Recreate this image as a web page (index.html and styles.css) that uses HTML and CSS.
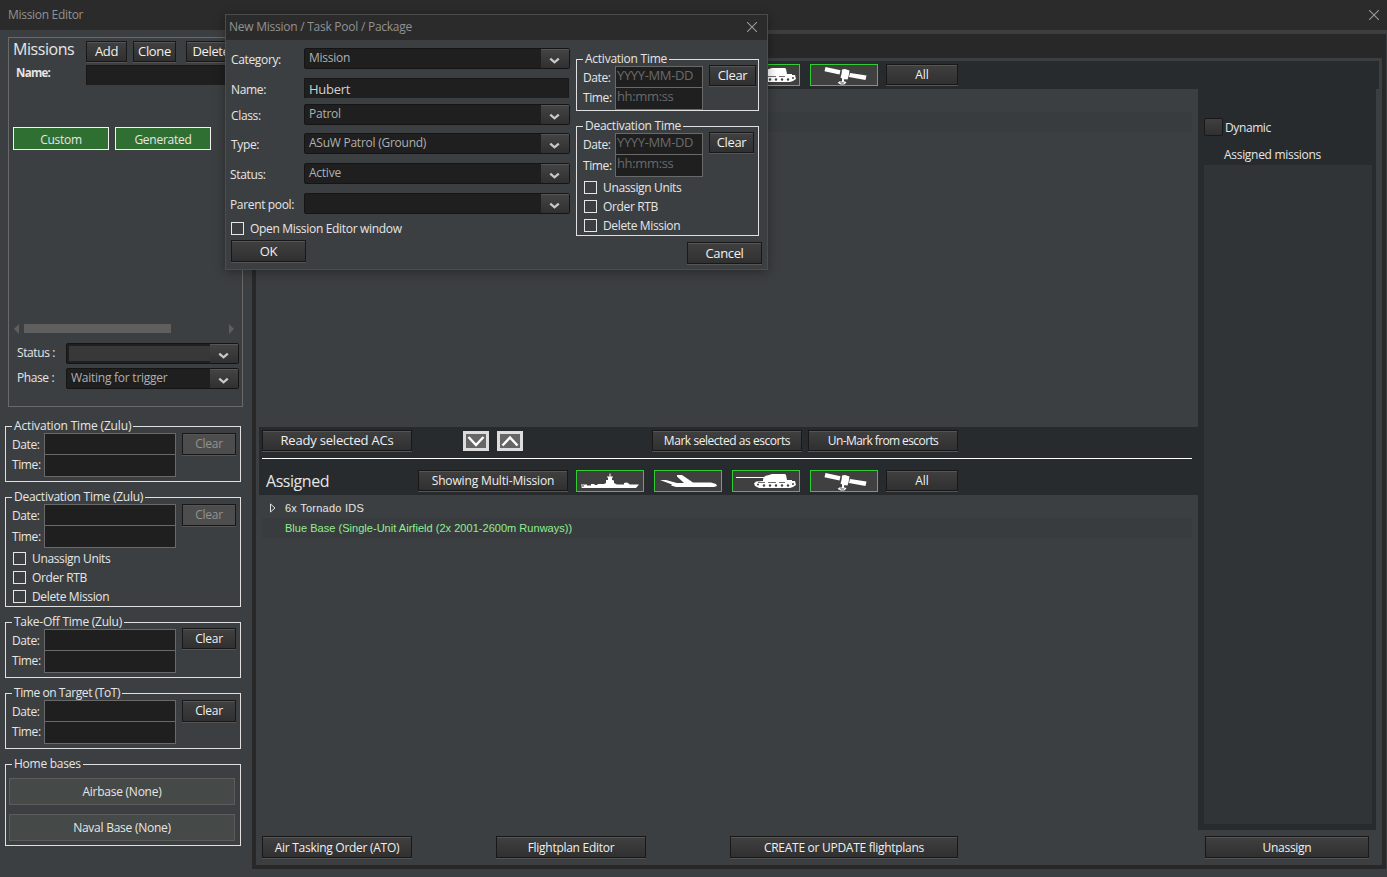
FILE: index.html
```
<!DOCTYPE html>
<html lang="en">
<head>
    <meta charset="UTF-8">
    <meta name="viewport" content="width=device-width, initial-scale=1.0">
    <title>Mission Editor</title>
    <link rel="stylesheet" href="styles.css">
</head>
<body>
    <!-- shared icons -->
    <svg class="sprites" width="0" height="0">
        <symbol id="ship" viewBox="0 0 66 20">
            <path fill="#fff" d="M5 17 4 15.500H7V14.500H4V13.500H10V14.500H14V13H17L18 14H20L21 13H27L29 12V9H31V6.500H30V5.500H32.500V2.500H33.500V5.500H36V6.500H35V9L37 9.500V12L40 13.500H47V12L50 11.500 53 13.500H62L59 17Z"/>
        </symbol>
        <symbol id="plane" viewBox="0 0 66 20">
            <path fill="#fff" d="M5 9H11L22 12H29L22 5.500V4H27L38 11.500H56L61 13 62 15 59 16H21L16 14.500 17 13.500Z"/>
        </symbol>
        <symbol id="tank" viewBox="0 0 66 20">
            <path fill="#fff" d="M3 6H31V7H3ZM30 8 32 5 36 4 39 3H52L53 4 54 9H59V10H62L63 14 60 16 57 17H26L22 15 21 12.500 23 10.500 30 10Z"/>
            <g fill="#404040">
                <circle cx="25" cy="13.500" r="1"/><circle cx="31" cy="14.500" r="1.200"/><circle cx="37" cy="14.500" r="1.200"/>
                <circle cx="43" cy="14.500" r="1.200"/><circle cx="49" cy="14.500" r="1.200"/><circle cx="55" cy="14.500" r="1.200"/><circle cx="60" cy="13" r="1"/>
                <path d="M25 11H32V11.800H25ZM35 11H43V11.800H35ZM46 11H52V11.800H46Z"/>
            </g>
        </symbol>
        <symbol id="sat" viewBox="0 0 66 20">
            <path fill="#fff" d="M14.500 2 29.500 5.200 28.500 9.500 13.500 6.300ZM31 4.500 34 4 38.500 5.500 38 9 37.500 11.500 36.500 14.500 32 14 29.500 12.500 30.500 9ZM39 8 55.500 10.500 54.500 15 38 12ZM31 13.500H33V17H31Z"/>
            <path fill="none" stroke="#fff" stroke-width="1.200" d="M27 17.500 30 19H33L35 17M28 17H34"/>
        </symbol>
        <symbol id="chev" viewBox="0 0 28 19">
            <path fill="none" stroke="#c8c8c8" stroke-width="2.400" d="M9 9 13.500 13 18 9"/>
        </symbol>
        <symbol id="close" viewBox="0 0 10 10">
            <path fill="none" stroke="#9a9a9a" stroke-width="1.100" d="M0 0 10 10M10 0 0 10"/>
        </symbol>
    </svg>

    <div class="titlebar">
        <span class="t-window">Mission Editor</span>
        <svg class="close"><use href="#close"/></svg>
    </div>

    <div class="main">
        <!-- left column -->
        <div class="sidebar">
            <div class="missions">
                <div class="missions-head">
                    <span class="heading">Missions</span>
                    <button class="btn big add">Add</button>
                    <button class="btn big clone">Clone</button>
                    <button class="btn big delete">Delete</button>
                </div>
                <div class="name-row">
                    <b>Name:</b>
                    <div class="box"></div>
                </div>
                <div class="tabs">
                    <button class="tab">Custom</button>
                    <button class="tab">Generated</button>
                </div>
                <div class="scrollbar">
                    <i class="arrow-left"></i>
                    <i class="thumb"></i>
                    <i class="arrow-right"></i>
                </div>
                <div class="select-row">
                    <span>Status :</span>
                    <div class="select"><div class="value focus"></div><svg class="drop"><use href="#chev"/></svg></div>
                </div>
                <div class="select-row">
                    <span>Phase :</span>
                    <div class="select"><div class="value">Waiting for trigger</div><svg class="drop"><use href="#chev"/></svg></div>
                </div>
            </div>

            <div class="group">
                <div class="group-title zulu">Activation Time (Zulu)</div>
                <div class="times">
                    <div class="labels"><span>Date:</span><span>Time:</span></div>
                    <div class="inputs"><div></div><div></div></div>
                    <button class="btn clear off">Clear</button>
                </div>
            </div>
            <div class="group tall">
                <div class="group-title">Deactivation Time (Zulu)</div>
                <div class="times">
                    <div class="labels apart"><span>Date:</span><span>Time:</span></div>
                    <div class="inputs"><div></div><div></div></div>
                    <button class="btn clear off">Clear</button>
                </div>
                <div class="checks">
                    <label class="check"><i></i>Unassign Units</label>
                    <label class="check"><i></i>Order RTB</label>
                    <label class="check"><i></i>Delete Mission</label>
                </div>
            </div>
            <div class="group">
                <div class="group-title">Take-Off Time (Zulu)</div>
                <div class="times">
                    <div class="labels"><span>Date:</span><span>Time:</span></div>
                    <div class="inputs"><div></div><div></div></div>
                    <button class="btn clear takeoff">Clear</button>
                </div>
            </div>
            <div class="group">
                <div class="group-title tot">Time on Target (ToT)</div>
                <div class="times">
                    <div class="labels"><span>Date:</span><span>Time:</span></div>
                    <div class="inputs"><div></div><div></div></div>
                    <button class="btn clear">Clear</button>
                </div>
            </div>
            <div class="group bases">
                <div class="group-title">Home bases</div>
                <button class="base">Airbase (None)</button>
                <button class="base">Naval Base (None)</button>
            </div>
        </div>

        <!-- right frame -->
        <div class="frame">
            <div class="strip"></div>
            <div class="filter-bar top">
                <div class="unit"><svg><use href="#ship"/></svg></div>
                <div class="unit"><svg><use href="#plane"/></svg></div>
                <div class="unit"><svg><use href="#tank"/></svg></div>
                <div class="unit"><svg><use href="#sat"/></svg></div>
                <button class="btn all">All</button>
            </div>
            <div class="columns">
                <div class="center">
                    <div class="list upper"><div class="row"></div><div class="row alt"></div></div>
                    <div class="band">
                        <div class="band-row">
                            <button class="btn w150 ready">Ready selected ACs</button>
                            <svg class="move down" viewBox="0 0 26 20"><path d="M1.500 1.500H24.500V18.500H1.500Z" fill="#666" stroke="#ddd" stroke-width="3"/><path d="M5.500 6 13 14 20.500 6" fill="none" stroke="#fff" stroke-width="2.500"/></svg>
                            <svg class="move" viewBox="0 0 26 20"><path d="M1.500 1.500H24.500V18.500H1.500Z" fill="#666" stroke="#ddd" stroke-width="3"/><path d="M5.500 14.500 13 6.500 20.500 14.500" fill="none" stroke="#fff" stroke-width="2.500"/></svg>
                            <button class="btn w150 mark">Mark selected as escorts</button>
                            <button class="btn w150 unmark">Un-Mark from escorts</button>
                        </div>
                        <div class="line"></div>
                        <div class="filter-bar">
                            <span class="heading assigned">Assigned</span>
                            <button class="btn w150 multi">Showing Multi-Mission</button>
                            <div class="unit"><svg><use href="#ship"/></svg></div>
                            <div class="unit"><svg><use href="#plane"/></svg></div>
                            <div class="unit"><svg><use href="#tank"/></svg></div>
                            <div class="unit"><svg><use href="#sat"/></svg></div>
                            <button class="btn all">All</button>
                        </div>
                    </div>
                    <div class="list lower">
                        <div class="row"><svg class="tri" viewBox="0 0 6 10"><path d="M.5 1V9L5 5Z" fill="none" stroke="#e0e0e0"/></svg><span class="unit-name">6x Tornado IDS</span></div>
                        <div class="row alt"><span class="base-name">Blue Base (Single-Unit Airfield (2x 2001-2600m Runways))</span></div>
                    </div>
                    <div class="actions">
                        <button class="btn w150">Air Tasking Order (ATO)</button>
                        <button class="btn w150">Flightplan Editor</button>
                        <button class="btn w228">CREATE or UPDATE flightplans</button>
                    </div>
                </div>
                <div class="side">
                    <div class="assigned-panel">
                        <label class="dynamic"><i></i><span>Dynamic</span></label>
                        <div class="assigned-title">Assigned missions</div>
                        <div class="assigned-list"></div>
                    </div>
                    <button class="btn unassign">Unassign</button>
                </div>
            </div>
        </div>
    </div>

    <!-- new mission dialog -->
    <div class="dialog">
        <div class="dialog-title">
            <span>New Mission / Task Pool / Package</span>
            <svg class="close"><use href="#close"/></svg>
        </div>
        <div class="dialog-body">
            <div class="form">
                <div class="fields">
                    <span>Category:</span><div class="select"><div class="value">Mission</div><svg class="drop"><use href="#chev"/></svg></div>
                    <span>Name:</span><div class="box">Hubert</div>
                    <span>Class:</span><div class="select"><div class="value">Patrol</div><svg class="drop"><use href="#chev"/></svg></div>
                    <span>Type:</span><div class="select"><div class="value">ASuW Patrol (Ground)</div><svg class="drop"><use href="#chev"/></svg></div>
                    <span class="out">Status:</span><div class="select"><div class="value">Active</div><svg class="drop"><use href="#chev"/></svg></div>
                    <span class="out">Parent pool:</span><div class="select"><div class="value"></div><svg class="drop"><use href="#chev"/></svg></div>
                </div>
                <label class="check open"><i></i>Open Mission Editor window</label>
                <button class="btn big ok">OK</button>
            </div>
            <div class="schedule">
                <div class="group">
                    <div class="group-title">Activation Time</div>
                    <div class="times">
                        <div class="labels"><span>Date:</span><span>Time:</span></div>
                        <div class="inputs"><div>YYYY-MM-DD</div><div>hh:mm:ss</div></div>
                        <button class="btn big clear wide">Clear</button>
                    </div>
                </div>
                <div class="group tall">
                    <div class="group-title">Deactivation Time</div>
                    <div class="times">
                        <div class="labels apart"><span>Date:</span><span>Time:</span></div>
                        <div class="inputs"><div>YYYY-MM-DD</div><div>hh:mm:ss</div></div>
                        <button class="btn big clear">Clear</button>
                    </div>
                    <div class="checks">
                        <label class="check"><i></i>Unassign Units</label>
                        <label class="check"><i></i>Order RTB</label>
                        <label class="check"><i></i>Delete Mission</label>
                    </div>
                </div>
                <button class="btn big cancel">Cancel</button>
            </div>
        </div>
    </div>
</body>
</html>
```
FILE: styles.css
```
* {
    box-sizing: border-box;
}

body {
    margin: 0;
    height: 877px;
    overflow: hidden;
    background-color: #3c3f41;
    color: #e6e6e6;
    font-family: "Open Sans", "Noto Sans", sans-serif;
    font-size: 12px;
    letter-spacing: -0.25px;
    line-height: 16px;
    white-space: nowrap;
}

button {
    font: inherit;
    letter-spacing: inherit;
    color: inherit;
    padding: 0;
    margin: 0;
}

.sprites {
    display: none;
}

.titlebar {
    display: flex;
    justify-content: space-between;
    align-items: center;
    height: 30px;
    padding: 0 8px;
    background-color: #2b2b2b;
    color: #929292;
}

.t-window {
    letter-spacing: -0.3px;
}

.close {
    width: 10px;
    height: 10px;
    overflow: visible;
}

.main {
    display: flex;
    height: 847px;
}

.heading {
    font-size: 16px;
    letter-spacing: -0.45px;
}

/* buttons and inputs */
.btn {
    flex: none;
    height: 21px;
    border: 1px solid #181818;
    border-radius: 0;
    background: linear-gradient(#404040, #303030);
    box-shadow: 0 1px 0 #555, inset 0 1px 0 #555;
    color: #f0f0f0;
    line-height: 18px;
    text-align: center;
}

.btn.big {
    padding-bottom: 2px;
    font-size: 13px;
    letter-spacing: -0.35px;
}

.btn.off {
    background: #4d4d4d;
    color: #929292;
}

.w150 {
    width: 150px;
}

.w228 {
    width: 228px;
}

.box {
    height: 20px;
    background-color: #1f1f1f;
    border: 1px solid #181818;
    border-bottom: 0;
}

.select {
    display: flex;
    height: 21px;
    background-color: #1f1f1f;
    border: 1px solid #151515;
    border-radius: 2px;
    color: #b0b0b0;
}

.value {
    flex: 1;
    padding-left: 4px;
    line-height: 18px;
}

.value.focus {
    margin: 2px 0 2px 2px;
    background-color: #383838;
}

.drop {
    width: 28px;
    height: 19px;
    background: linear-gradient(#434343, #303030);
    border-top: 1px solid #555;
}

.check {
    display: flex;
    align-items: center;
    height: 19px;
    letter-spacing: -0.36px;
}

.check i {
    width: 13px;
    height: 13px;
    margin-right: 6px;
    border: 1px solid #e6e6e6;
}

/* left column */
.sidebar {
    width: 252px;
    padding: 7px 0 0 5px;
}

.missions {
    width: 235px;
    height: 370px;
    margin: 0 0 19px 3px;
    padding-left: 4px;
    border: 1px solid #696969;
}

.missions-head {
    display: flex;
    height: 27px;
    padding-top: 3px;
}

.missions-head .heading {
    width: 73px;
    line-height: 17px;
}

.add {
    width: 41px;
    margin-right: 6px;
}

.clone {
    width: 43px;
    margin-right: 10px;
}

.delete {
    width: 50px;
}

.name-row {
    display: flex;
    padding-left: 3px;
}

.name-row b {
    width: 70px;
    font-size: 11.5px;
    letter-spacing: -0.7px;
    line-height: 15px;
}

.name-row .box {
    width: 150px;
}

.tabs {
    display: flex;
    gap: 6px;
    margin-top: 42px;
}

.tab {
    width: 96px;
    height: 23px;
    padding-top: 2px;
    background-color: #2f6f32;
    border: 1px solid #f0f0f0;
}

.scrollbar {
    display: flex;
    align-items: center;
    width: 221px;
    height: 9px;
    margin: 174px 0 10px 0;
}

.arrow-left,
.arrow-right {
    flex: none;
    width: 0;
    height: 0;
    border-top: 5px solid transparent;
    border-bottom: 5px solid transparent;
}

.arrow-left {
    margin-left: 1px;
    border-right: 5px solid #5f5f5f;
}

.arrow-right {
    margin-left: auto;
    border-left: 5px solid #5f5f5f;
}

.thumb {
    flex: none;
    width: 147px;
    height: 9px;
    margin-left: 5px;
    background-color: #5f5f5f;
}

.select-row {
    display: flex;
    height: 25px;
    padding-left: 4px;
    line-height: 19px;
}

.select-row > span {
    width: 49px;
    letter-spacing: -0.4px;
}

.select-row .select {
    width: 173px;
}

.group {
    width: 236px;
    height: 56px;
    margin-bottom: 15px;
    border: 1px solid #e0e0e0;
}

.group.tall {
    height: 110px;
    margin-bottom: 15px;
}

.group-title {
    width: fit-content;
    height: 14px;
    margin: -8px 0 0 6px;
    padding: 0 2px;
    background-color: #3c3f41;
    line-height: 14px;
}

.group-title.zulu {
    letter-spacing: -0.15px;
}

.group-title.tot {
    letter-spacing: -0.43px;
}

.times {
    display: flex;
    align-items: flex-start;
}

.labels {
    display: flex;
    flex-direction: column;
    width: 38px;
    padding: 2px 0 0 6px;
    letter-spacing: -0.4px;
    line-height: 20px;
}

.labels.apart span:last-child {
    margin-top: 1px;
}

.inputs {
    width: 132px;
    height: 44px;
    border: 1px solid #696969;
    background-color: #1f1f1f;
    color: #6a6a6a;
}

.inputs div {
    height: 21px;
    padding-left: 1px;
    font-size: 13px;
    letter-spacing: -0.35px;
    line-height: 17px;
}

.inputs div:first-child {
    border-bottom: 1px solid #696969;
}

.clear {
    width: 54px;
    height: 22px;
    margin-left: 6px;
}

.clear.takeoff {
    height: 21px;
    margin-top: -1px;
}

.checks {
    margin-top: 1px;
    padding-left: 7px;
}

.bases {
    height: 82px;
    padding: 0 3px;
}

.bases .group-title {
    margin: -8px 0 7px 3px;
}

.base {
    display: block;
    width: 226px;
    height: 27px;
    margin-bottom: 9px;
    border: 1px solid #5c5c5c;
    background-color: #454948;
}

/* right frame */
.frame {
    width: 1134px;
    height: 835px;
    margin-top: 4px;
    border: 4px solid #282828;
    border-top: 0;
}

.strip {
    height: 24px;
    margin-bottom: 3px;
    background-color: #282828;
}

.filter-bar {
    display: flex;
}

.filter-bar.top {
    height: 28px;
    margin: 0 3px;
    padding: 3px 0 0 317px;
    background-color: #282b2d;
}

.unit {
    width: 68px;
    height: 22px;
    margin-right: 10px;
    border: 1px solid #32cd32;
    background-color: #404040;
}

.unit svg {
    display: block;
    width: 66px;
    height: 20px;
}

.all {
    width: 72px;
    margin-left: -2px;
    letter-spacing: 0;
}

.columns {
    display: flex;
}

.center {
    width: 939px;
    margin-left: 3px;
}

.list {
    padding-top: 3px;
}

.list.upper {
    height: 338px;
}

.list.lower {
    height: 341px;
}

.row {
    display: flex;
    align-items: center;
    height: 20px;
    margin: 0 6px 0 3px;
    padding-left: 23px;
    font-family: "Liberation Sans", Arial, sans-serif;
    font-size: 11px;
    letter-spacing: 0;
}

.row.alt {
    background-color: #393c3e;
}

.tri {
    width: 6px;
    height: 10px;
    margin: 0 9px 0 -15px;
}

.unit-name {
    letter-spacing: 0.25px;
}

.base-name {
    letter-spacing: 0.03px;
    color: #90ee90;
}

.band {
    height: 68px;
    padding: 3px 6px 0 3px;
    background-color: #282b2d;
}

.band-row {
    display: flex;
    height: 28px;
}

.move {
    width: 26px;
    height: 20px;
    margin: 1px 0 0 8px;
}

.move.down {
    margin-left: 51px;
}

.ready {
    padding-bottom: 2px;
    font-size: 13px;
    letter-spacing: -0.2px;
}

.mark {
    margin-left: 129px;
    letter-spacing: -0.45px;
}

.unmark {
    margin-left: 6px;
    letter-spacing: -0.6px;
}

.line {
    height: 1px;
    background-color: #fff;
    margin-bottom: 11px;
}

.assigned {
    width: 156px;
    padding-left: 4px;
    line-height: 22px;
}

.multi {
    margin-right: 8px;
    letter-spacing: -0.15px;
}

.actions {
    display: flex;
    gap: 84px;
    padding-left: 3px;
}

.actions .btn,
.unassign {
    height: 22px;
    padding-top: 1px;
    letter-spacing: -0.28px;
}

.side {
    width: 178px;
}

.assigned-panel {
    height: 741px;
    padding: 29px 4px 0 6px;
    background-color: #282b2d;
}

.dynamic {
    display: flex;
    height: 18px;
    letter-spacing: -0.4px;
    line-height: 20px;
}

.dynamic i {
    width: 19px;
    height: 18px;
    margin-right: 2px;
    border: 1px solid #181818;
    border-radius: 2px;
    background: linear-gradient(#404040, #303030);
}

.assigned-title {
    height: 29px;
    padding: 11px 0 0 20px;
    letter-spacing: -0.3px;
}

.assigned-list {
    height: 659px;
    background-color: #313436;
}

.unassign {
    width: 164px;
    margin: 6px 0 0 7px;
}

/* dialog */
.dialog {
    position: absolute;
    left: 225px;
    top: 14px;
    width: 543px;
    height: 256px;
    background-color: #3c3f41;
    border: 1px solid #4a4c4d;
    box-shadow: 0 2px 10px rgba(0, 0, 0, 0.35);
}

.dialog-title {
    display: flex;
    justify-content: space-between;
    align-items: center;
    height: 25px;
    padding: 0 10px 1px 3px;
    background-color: #2b2b2b;
    color: #929292;
}

.dialog-body {
    display: flex;
    padding-left: 5px;
}

.form {
    width: 345px;
    padding-top: 8px;
}

.fields {
    display: grid;
    grid-template-columns: 73px 266px;
    grid-template-rows: 30px 26px 29px 30px 30px 29px;
    align-items: start;
}

.fields > span {
    letter-spacing: -0.35px;
    line-height: 24px;
}

.fields > .out {
    margin-left: -1px;
}

.fields .box {
    width: 265px;
    padding: 2px 4px;
    color: #d0d0d0;
    font-size: 13px;
}

.open {
    height: 13px;
    margin-bottom: 5px;
    letter-spacing: -0.32px;
}

.ok,
.cancel {
    display: block;
    width: 75px;
    height: 22px;
}

.btn.ok,
.btn.cancel {
    padding-bottom: 0;
}

.schedule {
    padding-top: 19px;
}

.schedule .group {
    width: 183px;
    height: 52px;
}

.schedule .group.tall {
    height: 110px;
    margin-bottom: 6px;
}

.schedule .inputs {
    width: 88px;
}

.schedule .clear {
    width: 45px;
    height: 21px;
    margin-top: -1px;
}

.schedule .clear.wide {
    width: 47px;
}

.cancel {
    margin-left: 111px;
}
```
